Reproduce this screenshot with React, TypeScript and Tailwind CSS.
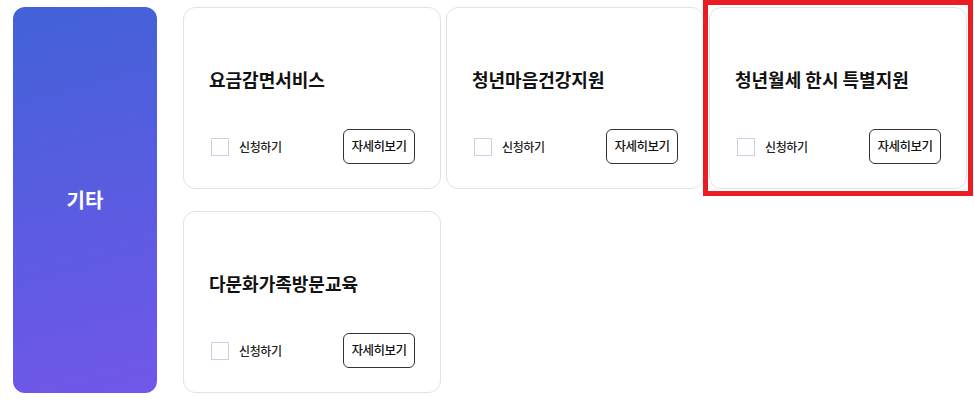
const services = ['요금감면서비스', '청년마음건강지원', '청년월세 한시 특별지원', '다문화가족방문교육'];

const font = { fontFamily: '"Noto Sans CJK KR", "Noto Sans", sans-serif' };

function ServiceCard({ title, highlight }: { title: string; highlight?: boolean }) {
  return (
    <div className="relative">
      <div className="flex h-[182px] flex-col rounded-[12px] border border-[#e2e2e2] bg-white pl-[25px] pr-[25px] pt-[58px]">
        <h3 className="text-[18px] font-bold leading-[26px] text-[#111]">{title}</h3>
        <div className="mt-[37px] flex items-center justify-between">
          <label className="flex items-center gap-[10px]">
            <span className="ml-[2px] block h-[18px] w-[18px] border border-[#c9d1e3] bg-white" />
            <span className="text-[12px] font-medium tracking-[-0.03em] text-[#222]">신청하기</span>
          </label>
          <button className="h-[35px] w-[72px] rounded-[6px] border border-[#333] bg-white text-[12.5px] font-medium tracking-[-0.04em] text-[#111]">
            자세히보기
          </button>
        </div>
      </div>
      {highlight && (
        <div className="pointer-events-none absolute -left-[6px] -right-[6px] -top-[7px] -bottom-[7px] border-[5px] border-[#ea1c24]" />
      )}
    </div>
  );
}

export default function App() {
  return (
    <div className="flex h-[404px] w-[974px] bg-white pl-[13px] pt-[7px]" style={font}>
      <div className="flex h-[386px] w-[144px] shrink-0 items-center justify-center rounded-[12px] bg-[linear-gradient(165deg,#4262d8,#7157e9)]">
        <span className="text-[20px] font-bold text-white">기타</span>
      </div>
      <div className="ml-[26px] grid grid-cols-[258px_258px_258px] content-start gap-x-[5px] gap-y-[22px]">
        {services.map((s, i) => (
          <ServiceCard key={s} title={s} highlight={i === 2} />
        ))}
      </div>
    </div>
  );
}
